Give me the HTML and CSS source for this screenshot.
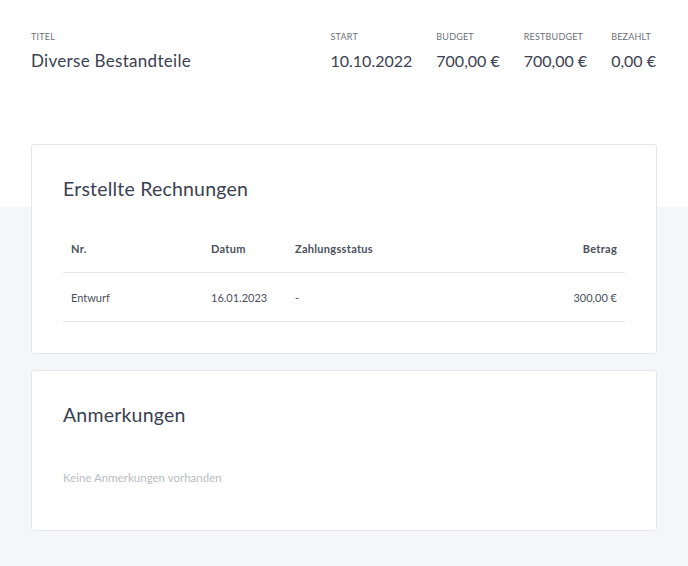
FILE: index.html
```html
<!DOCTYPE html>
<html lang="de">
<head>
    <meta charset="UTF-8">
    <meta name="viewport" content="width=device-width, initial-scale=1.0">
    <title>Diverse Bestandteile</title>
    <link rel="stylesheet" href="styles.css">
</head>
<body>
    <header class="project-head">
        <div class="stat stat-title">
            <div class="stat-label">Titel</div>
            <div class="stat-value">Diverse Bestandteile</div>
        </div>
        <div class="stat">
            <div class="stat-label">Start</div>
            <div class="stat-value">10.10.2022</div>
        </div>
        <div class="stat">
            <div class="stat-label">Budget</div>
            <div class="stat-value">700,00 €</div>
        </div>
        <div class="stat">
            <div class="stat-label">Restbudget</div>
            <div class="stat-value">700,00 €</div>
        </div>
        <div class="stat">
            <div class="stat-label">Bezahlt</div>
            <div class="stat-value">0,00 €</div>
        </div>
    </header>

    <main class="content">
        <section class="card">
            <h2>Erstellte Rechnungen</h2>
            <table class="invoices">
                <thead>
                    <tr>
                        <th class="col-nr">Nr.</th>
                        <th class="col-date">Datum</th>
                        <th>Zahlungsstatus</th>
                        <th class="amount">Betrag</th>
                    </tr>
                </thead>
                <tbody>
                    <tr>
                        <td>Entwurf</td>
                        <td>16.01.2023</td>
                        <td>-</td>
                        <td class="amount">300,00 €</td>
                    </tr>
                </tbody>
            </table>
        </section>

        <section class="card">
            <h2>Anmerkungen</h2>
            <p class="empty">Keine Anmerkungen vorhanden</p>
        </section>
    </main>
</body>
</html>
```

FILE: styles.css
```css
body {
    margin: 0;
    font-family: Lato, "Open Sans", sans-serif;
    color: #3a4152;
    background: #f5f6fa;
}

.project-head {
    display: flex;
    gap: 24px;
    height: 207px;
    box-sizing: border-box;
    padding: 31px 32px 0 31px;
    background: #fff;
}
.stat-title {
    flex: 1;
}
.stat-label {
    font-size: 9px;
    line-height: 12px;
    text-transform: uppercase;
    color: #6b6f78;
    letter-spacing: 0.2px;
}
.stat-value {
    margin-top: 8px;
    font-size: 16px;
    line-height: 20px;
    color: #3a4152;
}
.stat-title .stat-value {
    font-size: 17px;
    letter-spacing: 0.3px;
}

.content {
    padding: 0 31px 37px 31px;
}
.card {
    background: #fff;
    border: 1px solid #e4e6ec;
    border-radius: 3px;
    padding: 31px;
    margin-bottom: 16px;
}
.card:first-child {
    margin-top: -63px;
}
.card h2 {
    margin: 0;
    font-size: 19.5px;
    font-weight: normal;
    line-height: 26px;
    letter-spacing: 0.2px;
    color: #3a4152;
}

.invoices {
    width: 100%;
    margin-top: 22px;
    border-collapse: collapse;
    font-size: 11px;
}
.invoices th,
.invoices td {
    text-align: left;
    padding: 0 8px;
    height: 48px;
    border-bottom: 1px solid #e4e6ec;
}
.invoices th {
    font-weight: bold;
    color: #4a505c;
    letter-spacing: 0.3px;
}
.invoices td {
    color: #4a505c;
}
.invoices .col-nr {
    width: 124px;
}
.invoices .col-date {
    width: 68px;
}
.invoices .amount {
    text-align: right;
}

.empty {
    margin: 31px 0 2px 0;
    font-size: 11.5px;
    line-height: 38px;
    color: #b9bcc2;
}
```
